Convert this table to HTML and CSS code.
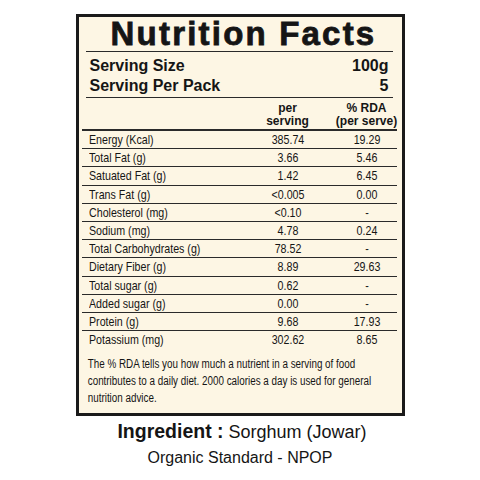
FILE: index.html
```html
<!DOCTYPE html>
<html>
<head>
    <meta charset="UTF-8">
    <title>Nutrition Facts</title>
    <link rel="stylesheet" href="styles.css">
</head>
<body>
    <div class="label">
        <div class="title">Nutrition Facts</div>

        <div class="serving">
            <div class="serving-row"><span>Serving Size</span><span>100g</span></div>
            <div class="serving-row"><span>Serving Per Pack</span><span>5</span></div>
        </div>

        <div class="facts">
            <div class="row head">
                <div></div>
                <div class="val">per<br>serving</div>
                <div class="val">% RDA<br>(per serve)</div>
            </div>
            <div class="row"><div>Energy (Kcal)</div><div class="val">385.74</div><div class="val">19.29</div></div>
            <div class="row"><div>Total Fat (g)</div><div class="val">3.66</div><div class="val">5.46</div></div>
            <div class="row"><div>Satuated Fat (g)</div><div class="val">1.42</div><div class="val">6.45</div></div>
            <div class="row"><div>Trans Fat (g)</div><div class="val">&lt;0.005</div><div class="val">0.00</div></div>
            <div class="row"><div>Cholesterol (mg)</div><div class="val">&lt;0.10</div><div class="val">-</div></div>
            <div class="row"><div>Sodium (mg)</div><div class="val">4.78</div><div class="val">0.24</div></div>
            <div class="row"><div>Total Carbohydrates (g)</div><div class="val">78.52</div><div class="val">-</div></div>
            <div class="row"><div>Dietary Fiber (g)</div><div class="val">8.89</div><div class="val">29.63</div></div>
            <div class="row"><div>Total sugar (g)</div><div class="val">0.62</div><div class="val">-</div></div>
            <div class="row"><div>Added sugar (g)</div><div class="val">0.00</div><div class="val">-</div></div>
            <div class="row"><div>Protein (g)</div><div class="val">9.68</div><div class="val">17.93</div></div>
            <div class="row last"><div>Potassium (mg)</div><div class="val">302.62</div><div class="val">8.65</div></div>
        </div>

        <p class="note">The % RDA tells you how much a nutrient in a serving of food<br>contributes to a daily diet. 2000 calories a day is used for general<br>nutrition advice.</p>
    </div>

    <div class="ingredient"><b>Ingredient :</b> Sorghum (Jowar)</div>
    <div class="standard">Organic Standard - NPOP</div>
</body>
</html>
```

FILE: styles.css
```css
:root {
    --cream: #fdf6e4;
    --ink: #151515;
    --rule: #2a2a2a;
}
body {
    margin: 0;
    padding-top: 14px;
    background: #fff;
    color: var(--ink);
    font-family: 'Liberation Sans', Arial, sans-serif;
}
.label {
    width: 315px;
    margin: 0 auto;
    background: var(--cream);
    border: 3px solid #1a1a1a;
    padding: 0 5px 0 3px;
}
.title {
    font-size: 33px;
    line-height: 34px;
    font-weight: bold;
    letter-spacing: 2.2px;
    -webkit-text-stroke: 0.8px var(--ink);
    text-align: center;
    margin: 0 4px;
    padding-left: 9px;
    border-bottom: 1.5px solid var(--rule);
}
.serving {
    margin: 0 4px;
    padding: 4px 4px 1px 4px;
    border-bottom: 1.5px solid var(--rule);
}
.serving-row {
    display: flex;
    justify-content: space-between;
    font-size: 16px;
    font-weight: bold;
    line-height: 20px;
}
.facts {
    font-size: 13px;
}
.row {
    display: grid;
    grid-template-columns: 1fr 80px 60px;
    column-gap: 9px;
    line-height: 17.2px;
    padding-left: 7px;
    border-bottom: 1px solid var(--rule);
}
/* condensed look: no narrow face installed */
.row > div {
    transform: scaleX(0.82);
    transform-origin: left center;
    white-space: nowrap;
}
.row > .val {
    transform-origin: center;
}
.row.head {
    font-weight: bold;
    font-size: 12px;
    line-height: 13px;
    padding-top: 4px;
    padding-bottom: 1px;
    border-bottom: 2px solid var(--rule);
}
.row.head > div {
    transform: none;
}
.row.head .val {
    display: flex;
    flex-direction: column;
    align-items: center;
}
.row.last {
    border-bottom: none;
}
.val {
    text-align: center;
}
.note {
    font-size: 12px;
    line-height: 17px;
    margin: 8px 0 0 0;
    padding: 0 7px 6px 7px;
    white-space: nowrap;
    transform: scaleX(0.82);
    transform-origin: left top;
}
.ingredient {
    text-align: center;
    font-size: 18px;
    line-height: 24px;
    margin-top: 3px;
    padding-left: 4px;
}
.ingredient b {
    font-size: 19.5px;
}
.standard {
    text-align: center;
    font-size: 16px;
    line-height: 22px;
    margin-top: 3px;
}
```
